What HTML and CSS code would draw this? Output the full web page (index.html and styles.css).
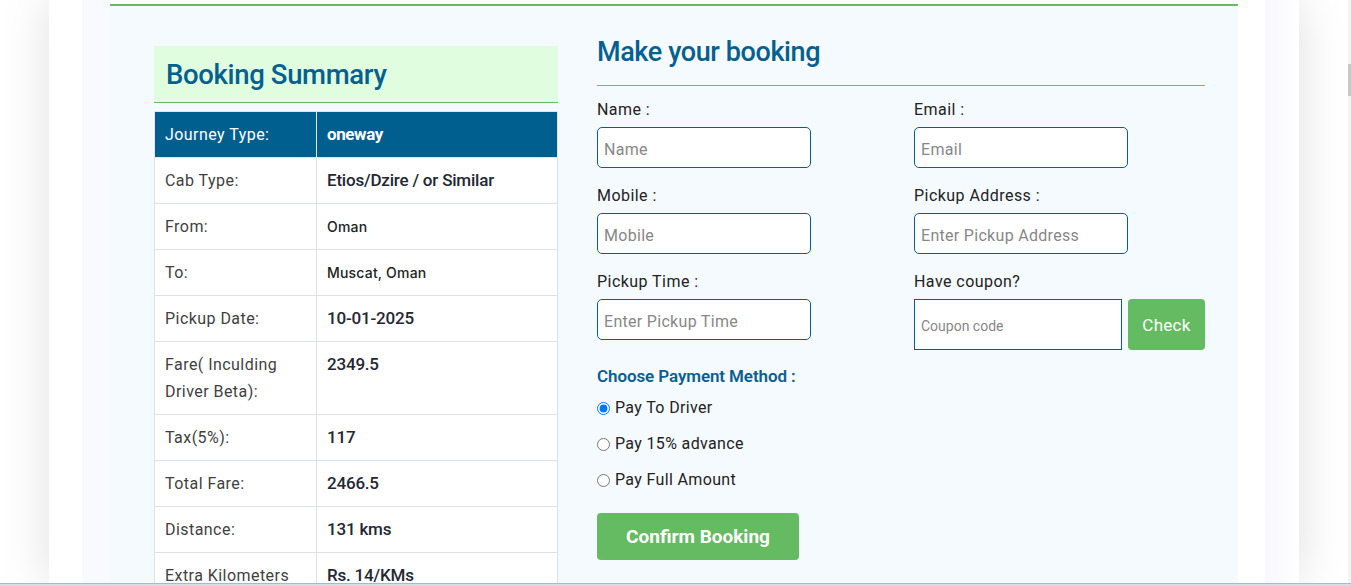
FILE: index.html
```
<!DOCTYPE html>
<html lang="en">
<head>
<meta charset="utf-8">
<title>Make your booking</title>
<link rel="stylesheet" href="styles.css">
</head>
<body>
<div class="viewport">
  <div class="gutter"></div>
  <div class="card">
    <div class="content">
      <section class="summary">
        <div class="summary-head">Booking Summary</div>
        <table class="summary-table">
          <tr class="head-row"><td class="k">Journey Type:</td><td class="v strong">oneway</td></tr>
          <tr><td class="k">Cab Type:</td><td class="v">Etios/Dzire / or Similar</td></tr>
          <tr><td class="k">From:</td><td class="v place">Oman</td></tr>
          <tr><td class="k">To:</td><td class="v place">Muscat, Oman</td></tr>
          <tr><td class="k">Pickup Date:</td><td class="v">10-01-2025</td></tr>
          <tr><td class="k">Fare( Inculding Driver Beta):</td><td class="v">2349.5</td></tr>
          <tr><td class="k">Tax(5%):</td><td class="v">117</td></tr>
          <tr><td class="k">Total Fare:</td><td class="v">2466.5</td></tr>
          <tr><td class="k">Distance:</td><td class="v">131 kms</td></tr>
          <tr><td class="k">Extra Kilometers Charges:</td><td class="v">Rs. 14/KMs</td></tr>
        </table>
      </section>
      <section class="booking">
        <h2 class="booking-title">Make your booking</h2>
        <hr class="rule">
        <div class="form-grid">
          <div class="group">
            <label class="lbl">Name :</label>
            <input class="field" type="text" placeholder="Name">
          </div>
          <div class="group">
            <label class="lbl">Email :</label>
            <input class="field" type="text" placeholder="Email">
          </div>
          <div class="group">
            <label class="lbl">Mobile :</label>
            <input class="field" type="text" placeholder="Mobile">
          </div>
          <div class="group">
            <label class="lbl">Pickup Address :</label>
            <input class="field" type="text" placeholder="Enter Pickup Address">
          </div>
          <div class="group">
            <label class="lbl">Pickup Time :</label>
            <input class="field" type="text" placeholder="Enter Pickup Time">
          </div>
          <div class="group">
            <label class="lbl">Have coupon?</label>
            <div class="coupon">
              <input class="coupon-field" type="text" placeholder="Coupon code">
              <button class="check-btn" type="button">Check</button>
            </div>
          </div>
        </div>
        <div class="pay-title">Choose Payment Method :</div>
        <div class="pay-list">
          <label class="pay"><input type="radio" name="pay" checked><span>Pay To Driver</span></label>
          <label class="pay"><input type="radio" name="pay"><span>Pay 15% advance</span></label>
          <label class="pay"><input type="radio" name="pay"><span>Pay Full Amount</span></label>
        </div>
        <button class="confirm-btn" type="button">Confirm Booking</button>
      </section>
    </div>
  </div>
  <div class="gutter"></div>
  <div class="scrollbar"><div class="thumb"></div></div>
</div>
<div class="bottom-bar"></div>
</body>
</html>
```
FILE: styles.css
```
* { box-sizing: border-box; }
html, body { margin: 0; padding: 0; }
body {
  width: 1351px;
  height: 586px;
  overflow: hidden;
  background: #ffffff;
  font-family: Roboto, "Liberation Sans", Arial, sans-serif;
  display: flex;
  flex-direction: column;
}
.viewport {
  height: 583px;
  display: flex;
  overflow: hidden;
}
.gutter { width: 49px; flex: none; }
.card {
  width: 1250px;
  flex: none;
  height: 100%;
  background: linear-gradient(to right, #fff 0 33px, #f9faff 33px 61px, #fff 61px 1216px, #f8f8fe 1216px, #fff 1250px);
  box-shadow: 0 0 46px rgba(0, 0, 0, 0.13);
  padding-top: 4px;
  position: relative;
}
.scrollbar {
  width: 3px;
  flex: none;
  background: #f4f4f4;
}
.thumb {
  margin-top: 64px;
  height: 32px;
  background: #c8c8c8;
}
.bottom-bar {
  height: 3px;
  background: #d2dfe9;
  border-top: 1px solid #a9b9c6;
}
.content {
  margin-left: 61px;
  width: 1128px;
  height: 620px;
  background: #f5faff;
  border-top: 2px solid #64bc5f;
  padding: 29px 0 0 44px;
  display: flex;
  align-items: flex-start;
  gap: 39px;
}

/* summary */
.summary { width: 404px; margin-top: 11px; flex: none; }
.summary-head {
  height: 57px;
  background: #e0fde0;
  border-bottom: 1px solid #64bc5f;
  display: flex;
  align-items: center;
  padding-left: 12px;
  color: #04608f;
  font-size: 27.5px;
  font-weight: 500;
  letter-spacing: -0.35px;
}
.summary-table {
  margin-top: 8px;
  width: 404px;
  border-collapse: collapse;
  background: #fff;
  table-layout: fixed;
}
.summary-table td {
  border: 1px solid #dee2e6;
  padding: 9px 10px;
  line-height: 27px;
  vertical-align: top;
}
.summary-table tr:first-child td { padding-top: 9px; }
.summary-table td.k {
  width: 162px;
  font-size: 16px;
  color: #3f3f3f;
  font-weight: 400;
  letter-spacing: 0.45px;
}
.summary-table td.v {
  font-size: 17px;
  font-weight: 500;
  color: #232733;
  letter-spacing: -0.2px;
}
.summary-table td.place {
  font-family: Inter, "Noto Sans", sans-serif;
  font-size: 14px;
  font-weight: 500;
  color: #222;
  letter-spacing: 0.2px;
}
.head-row td { background: #005f8f; border-color: #dfe6ee; }
.summary-table .head-row td.k { color: #fff; }
.summary-table .head-row td.v { color: #fff; font-weight: 700; font-size: 17px; letter-spacing: -0.4px; }

/* booking */
.booking { width: 608px; flex: none; }
.booking-title {
  margin: 0;
  font-size: 27px;
  line-height: 34px;
  font-weight: 500;
  color: #04608f;
  letter-spacing: -0.4px;
}
.rule {
  margin: 16px 0 12px;
  border: 0;
  height: 1px;
  background: #6abf69;
}
.form-grid {
  display: grid;
  grid-template-columns: 317px 291px;
  row-gap: 16px;
  align-items: start;
}
.lbl {
  display: block;
  font-size: 16px;
  line-height: 22px;
  padding-top: 1px;
  height: 22px;
  color: #222;
  margin-bottom: 7px;
  letter-spacing: 0.45px;
}
.field {
  display: block;
  width: 214px;
  height: 41px;
  border: 1px solid #0b5e8c;
  border-radius: 5px;
  background: #fff;
  padding: 3px 6px 0;
  font-family: inherit;
  font-size: 16px;
  color: #333;
  outline: none;
  letter-spacing: 0.3px;
}
.field::placeholder, .coupon-field::placeholder { color: #878787; }
.coupon { display: flex; gap: 6px; }
.coupon-field {
  width: 208px;
  height: 51px;
  border: 1px solid #0b5e8c;
  border-radius: 0;
  background: #fff;
  padding: 2px 6px 0;
  font-family: inherit;
  font-size: 14px;
  outline: none;
}
.check-btn {
  width: 77px;
  height: 51px;
  border: 0;
  border-radius: 4px;
  background: #65bb61;
  color: #fff;
  font-family: inherit;
  font-size: 17px;
  font-weight: 400;
  letter-spacing: 0.3px;
}
.pay-title {
  margin-top: 15px;
  font-size: 17px;
  line-height: 22px;
  font-weight: 600;
  color: #0a5f8f;
  letter-spacing: -0.1px;
}
.pay-list {
  margin-top: 10px;
  display: flex;
  flex-direction: column;
  gap: 14px;
}
.pay {
  display: flex;
  align-items: center;
  font-size: 16px;
  line-height: 22px;
  color: #222;
  letter-spacing: 0.35px;
}
.pay input { margin: 0 5px 0 0; width: 13px; height: 13px; }
.confirm-btn {
  margin-top: 22px;
  width: 202px;
  height: 47px;
  border: 0;
  border-radius: 4px;
  background: #65bb61;
  color: #fff;
  font-family: inherit;
  font-size: 19px;
  font-weight: 700;
}
```
